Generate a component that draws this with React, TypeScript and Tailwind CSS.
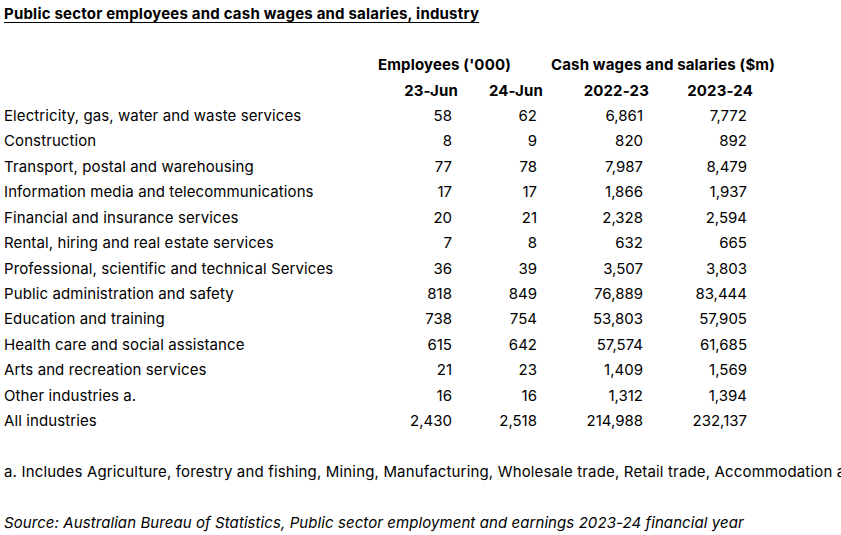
const rows: [string, string, string, string, string][] = [
  ['Electricity, gas, water and waste services', '58', '62', '6,861', '7,772'],
  ['Construction', '8', '9', '820', '892'],
  ['Transport, postal and warehousing', '77', '78', '7,987', '8,479'],
  ['Information media and telecommunications', '17', '17', '1,866', '1,937'],
  ['Financial and insurance services', '20', '21', '2,328', '2,594'],
  ['Rental, hiring and real estate services', '7', '8', '632', '665'],
  ['Professional, scientific and technical Services', '36', '39', '3,507', '3,803'],
  ['Public administration and safety', '818', '849', '76,889', '83,444'],
  ['Education and training', '738', '754', '53,803', '57,905'],
  ['Health care and social assistance', '615', '642', '57,574', '61,685'],
  ['Arts and recreation services', '21', '23', '1,409', '1,569'],
  ['Other industries a.', '16', '16', '1,312', '1,394'],
  ['All industries', '2,430', '2,518', '214,988', '232,137'],
];

const rowCls = 'h-[25.42px] flex items-center';

export default function App() {
  return (
    <div className="w-[841px] h-[535px] overflow-hidden bg-white text-black text-[15px] pt-[2px] font-['Inter',sans-serif]">
      <div className={`${rowCls} px-1 whitespace-nowrap`}>
        <span className="font-bold underline underline-offset-[3px] decoration-1 tracking-[0.2px]">
          Public sector employees and cash wages and salaries, industry
        </span>
      </div>
      <div className={rowCls} />

      <div className="grid grid-cols-[374px_88px_85px_106px_104px] whitespace-nowrap">
        <div className={rowCls} />
        <div className={`${rowCls} col-span-2 px-1 font-bold tracking-[0.15px]`}>Employees ('000)</div>
        <div className={`${rowCls} col-span-2 px-1 font-bold tracking-[0.15px]`}>Cash wages and salaries ($m)</div>

        <div className={rowCls} />
        <div className={`${rowCls} justify-end pr-1 font-bold tracking-[0.15px]`}>23-Jun</div>
        <div className={`${rowCls} justify-end pr-1 font-bold tracking-[0.15px]`}>24-Jun</div>
        <div className={`${rowCls} justify-end pr-1 font-bold tracking-[0.15px]`}>2022-23</div>
        <div className={`${rowCls} justify-end pr-1 font-bold tracking-[0.15px]`}>2023-24</div>

        {rows.map((r) => (
          <div key={r[0]} className="contents">
            <div className={`${rowCls} px-1 tracking-[0.1px]`}>{r[0]}</div>
            <div className={`${rowCls} justify-end pr-[10px]`}>{r[1]}</div>
            <div className={`${rowCls} justify-end pr-[10px]`}>{r[2]}</div>
            <div className={`${rowCls} justify-end pr-[10px]`}>{r[3]}</div>
            <div className={`${rowCls} justify-end pr-[10px]`}>{r[4]}</div>
          </div>
        ))}
      </div>

      <div className={rowCls} />
      <div className={`${rowCls} px-1 whitespace-nowrap tracking-[0.16px]`}>
        a. Includes Agriculture, forestry and fishing, Mining, Manufacturing, Wholesale trade, Retail trade, Accommodation and food services, Other services
      </div>
      <div className={rowCls} />
      <div className={`${rowCls} px-1 whitespace-nowrap italic tracking-[0.08px]`}>
        Source: Australian Bureau of Statistics, Public sector employment and earnings 2023-24 financial year
      </div>
    </div>
  );
}
